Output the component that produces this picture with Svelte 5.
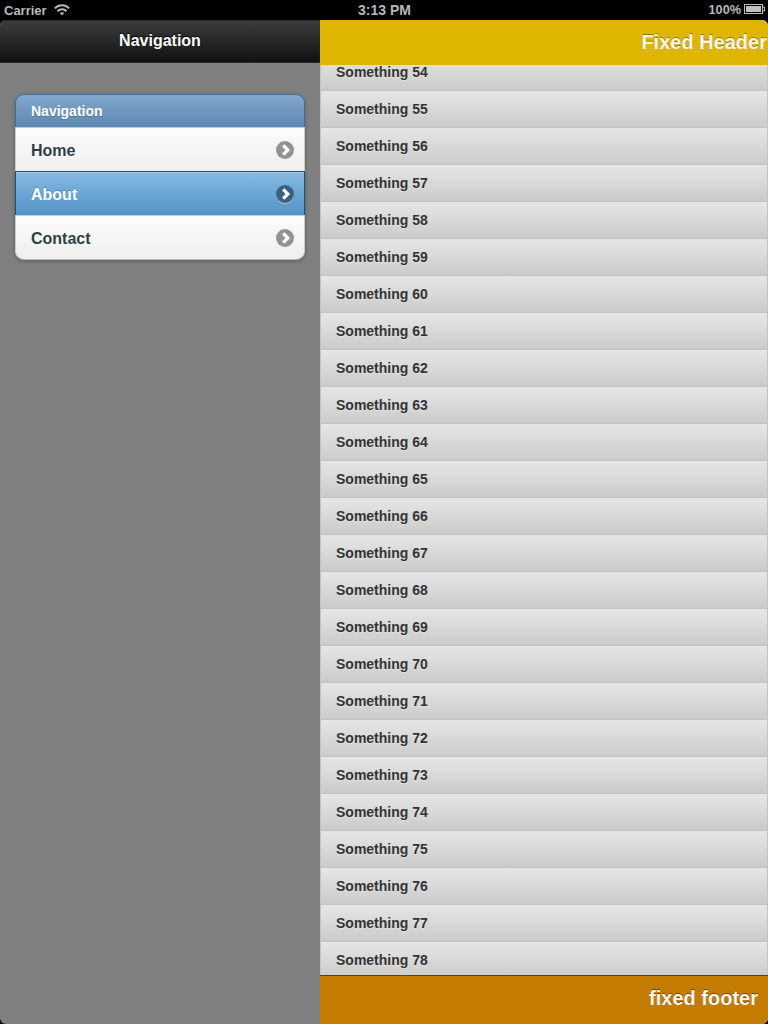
<script>
  const links = [
    { label: 'Home', active: false },
    { label: 'About', active: true },
    { label: 'Contact', active: false },
  ];
  const rows = Array.from({ length: 25 }, (_, i) => i + 54);
</script>

<div class="device">
  <div class="status">
    <div class="carrier">
      <span>Carrier</span>
      <svg width="16" height="12" viewBox="0 0 16 12" fill="none" stroke="#b8b8b8" stroke-width="2">
        <path d="M.8 4.4C4.8.3 11.200.3 15.200 4.400" />
        <path d="M3.500 7.200c2.500-2.500 6.500-2.500 9 0" />
        <path d="M5.700 9.100Q8 7.200 10.300 9.100L8 11.500z" fill="#b8b8b8" stroke="none" />
      </svg>
    </div>
    <span class="clock">3:13 PM</span>
    <div class="power">
      <span>100%</span>
      <svg width="21" height="10" viewBox="0 0 21 10">
        <rect x=".5" y=".5" width="18" height="9" fill="none" stroke="#bdbdbd" />
        <rect x="2" y="2" width="15" height="6" fill="#c2bfc2" />
        <path d="M19 3h1.500v4H19" fill="none" stroke="#bdbdbd" />
      </svg>
    </div>
  </div>
  <div class="screen">
    <aside>
      <header class="navbar">Navigation</header>
      <ul class="menu">
        <li class="divider">Navigation</li>
        {#each links as link}
          <li class="item" class:active={link.active}>
            <span>{link.label}</span>
            <svg width="20" height="20" viewBox="0 0 20 20">
              {#if link.active}<circle cx="10" cy="11" r="9" fill="#fff" opacity=".4" />{/if}
              <circle cx="10" cy="10" r="9" fill={link.active ? '#3c6180' : '#929292'} />
              <path d="M8.200 5.400L12.800 10 8.200 14.600" fill="none" stroke="#fff" stroke-width="3.200" />
            </svg>
          </li>
        {/each}
      </ul>
    </aside>
    <main>
      <header class="top">Fixed Header</header>
      <div class="scroll">
        <ul class="list">
          {#each rows as n}
            <li>Something {n}</li>
          {/each}
        </ul>
      </div>
      <footer>fixed footer</footer>
    </main>
  </div>
</div>

<style>
  :global(body) { margin: 0; background: #000; }
  .device {
    width: 768px; height: 1024px; display: flex; flex-direction: column;
    overflow: hidden; background: #000;
    font-family: "Liberation Sans", Arial, sans-serif; font-weight: bold;
  }
  ul { list-style: none; margin: 0; padding: 0; }
  svg { display: block; flex: none; }
  .status {
    flex: none; height: 20px; box-sizing: border-box; padding: 0 3px 0 4px;
    display: grid; grid-template-columns: 1fr auto 1fr; align-items: center;
    color: #b8b8b8; font-size: 13px; line-height: 19px;
  }
  .carrier { display: flex; align-items: center; gap: 7px; font-size: 13px; }
  .clock { font-size: 14px; line-height: 18px; margin-top: -1px; }
  .power { display: flex; align-items: center; justify-content: flex-end; gap: 3px; font-size: 12.700px; }
  .power svg { margin-top: -2px; }
  .screen { flex: 1; min-height: 0; display: flex; border-radius: 6px; overflow: hidden; }
  aside { width: 320px; flex: none; background: #808080; }
  .navbar {
    height: 43px; box-sizing: border-box; border: solid #2a2a2a; border-width: 1px 0;
    background: linear-gradient(#3c3c3c, #111);
    color: #fff; font-size: 16px; line-height: 39px; text-align: center;
    text-shadow: 0 -1px 1px #000;
  }
  .menu {
    margin: 31px 15px 0; border-radius: 9px; height: 166px;
    box-shadow: 0 1px 4px rgba(0, 0, 0, .3);
  }
  .divider {
    height: 33px; box-sizing: border-box; padding: 0 15px;
    border: 1px solid #456f9a; border-bottom: 0; border-radius: 9px 9px 0 0;
    background: linear-gradient(#81a8ce, #5e87b0);
    color: #fff; font-size: 14px; line-height: 33px; text-shadow: 0 1px 1px rgba(37, 79, 122, .4);
  }
  .item {
    height: 44px; box-sizing: border-box; padding: 0 9px 0 15px;
    display: flex; align-items: center; justify-content: space-between;
    border: 1px solid #ccc; border-bottom: 0;
    background: linear-gradient(#fdfdfd, #eee);
    color: #2f3e46; font-size: 16px; text-shadow: 0 1px 1px #fff;
  }
  .item span { line-height: 20px; padding-top: 2px; }
  .item:last-child { height: 45px; border-bottom: 1px solid #bbb; border-radius: 0 0 9px 9px; }
  .active {
    border-color: #155678; background: linear-gradient(#85bae4, #5393c5);
    box-shadow: inset 0 1px #9bcaf0; color: #fff; text-shadow: 0 -1px 1px rgba(20, 80, 114, .35);
  }
  main { flex: 1; min-width: 0; display: flex; flex-direction: column; background: #ddd; }
  .top {
    height: 45px; flex: none; box-sizing: border-box; padding-right: 1px; text-align: right;
    background: #deb500; color: #f5f5f5; font-size: 20px; line-height: 45px;
    text-shadow: 0 -1px 0 rgba(0, 0, 0, .35); white-space: nowrap;
  }
  .scroll { flex: 1; min-height: 0; overflow: hidden; }
  .list { margin-top: -12px; }
  .list li {
    height: 37px; box-sizing: border-box; padding: 0 15px;
    border: solid #c3c3c3; border-width: 1px 1px 0;
    background: linear-gradient(#e6e6e6, #cbcbcb);
    color: #333; font-size: 14px; line-height: 37px; text-shadow: 0 1px 0 rgba(255, 255, 255, .3);
  }
  footer {
    height: 49px; flex: none; box-sizing: border-box; padding-right: 10px; text-align: right;
    border-top: 1px solid #4d4335; background: #c37b00; color: #f5f5f5;
    font-size: 20px; line-height: 44px; text-shadow: 0 -1px 0 rgba(0, 0, 0, .45);
  }
</style>
